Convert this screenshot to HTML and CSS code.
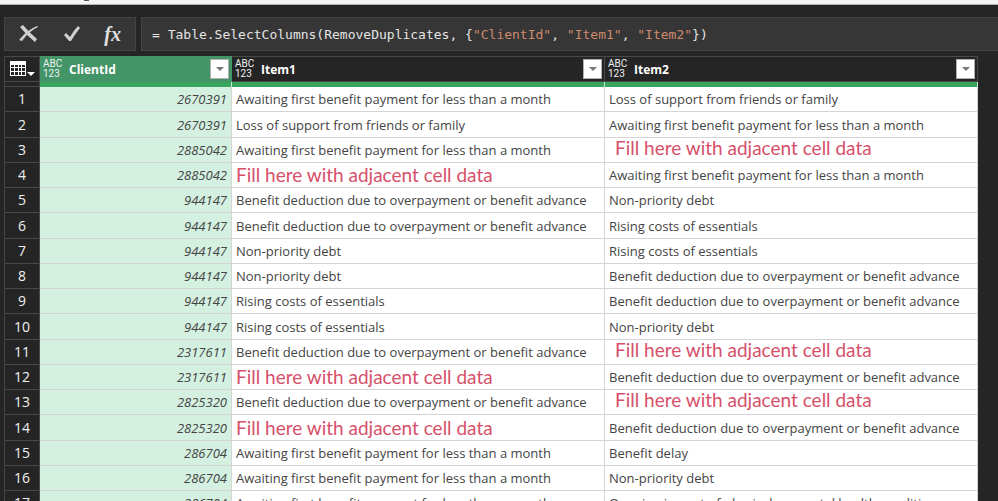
FILE: index.html
```
<!DOCTYPE html>
<html lang="en">
<head>
    <meta charset="UTF-8">
    <meta name="viewport" content="width=device-width, initial-scale=1.0">
    <title>Power Query Editor</title>
    <link rel="stylesheet" href="styles.css">
</head>
<body>
    <div class="ribbon-edge"><span class="ribbon-mark"></span></div>

    <div class="formula-row">
        <div class="formula-actions">
            <button type="button" aria-label="Cancel">
                <svg width="20" height="18" viewBox="0 0 20 18"><path d="M1 2L4 0Q9 6 18 14L16 17Q8 11 1 2Z"/><path d="M19 2Q10 6 3 16L0 15Q8 5 18 1Z"/></svg>
            </button>
            <button type="button" aria-label="Apply">
                <svg width="18" height="16" viewBox="0 0 18 16"><path d="M1 9L3 7L7 11Q11 4 15 0L17 2Q12 8 8 15L6 15Z"/></svg>
            </button>
            <button type="button" class="fx" aria-label="Add step"><i>fx</i></button>
        </div>
        <div class="formula"><code>= Table.SelectColumns(RemoveDuplicates, {<span class="string">"ClientId"</span>, <span class="string">"Item1"</span>, <span class="string">"Item2"</span>})</code></div>
    </div>

    <main class="grid">
        <table>
            <colgroup>
                <col class="col-num">
                <col class="col-id">
                <col class="col-item">
                <col class="col-item">
            </colgroup>
            <thead>
                <tr>
                    <th class="corner">
                        <button type="button" class="table-menu" aria-label="Table options">
                            <svg width="25" height="16" viewBox="0 0 25 16"><path class="frame" d="M0 0H16V15H0Z"/><path class="holes" d="M1 4h3v2H1zM5 4h3v2H5zM9 4h2v2H9zM12 4h3v2h-3zM1 7h3v3H1zM5 7h3v3H5zM9 7h2v3H9zM12 7h3v3h-3zM1 11h3v3H1zM5 11h3v3H5zM9 11h2v3H9zM12 11h3v3h-3z"/><path class="frame" d="M17 11H25L21 15Z"/></svg>
                        </button>
                    </th>
                    <th class="selected">
                        <div class="head">
                            <span class="type"><span>ABC</span><span>123</span></span>
                            <span class="name">ClientId</span>
                            <button type="button" class="filter" aria-label="Filter ClientId"></button>
                        </div>
                    </th>
                    <th>
                        <div class="head">
                            <span class="type"><span>ABC</span><span>123</span></span>
                            <span class="name">Item1</span>
                            <button type="button" class="filter" aria-label="Filter Item1"></button>
                        </div>
                    </th>
                    <th>
                        <div class="head">
                            <span class="type"><span>ABC</span><span>123</span></span>
                            <span class="name">Item2</span>
                            <button type="button" class="filter" aria-label="Filter Item2"></button>
                        </div>
                    </th>
                </tr>
                <tr class="quality"><td></td><td></td><td></td><td></td></tr>
            </thead>
            <tbody>
                <tr><th>1</th><td class="id">2670391</td><td>Awaiting first benefit payment for less than a month</td><td>Loss of support from friends or family</td></tr>
                <tr><th>2</th><td class="id">2670391</td><td>Loss of support from friends or family</td><td>Awaiting first benefit payment for less than a month</td></tr>
                <tr><th>3</th><td class="id">2885042</td><td>Awaiting first benefit payment for less than a month</td><td class="note indent">Fill here with adjacent cell data</td></tr>
                <tr><th>4</th><td class="id">2885042</td><td class="note">Fill here with adjacent cell data</td><td>Awaiting first benefit payment for less than a month</td></tr>
                <tr><th>5</th><td class="id">944147</td><td>Benefit deduction due to overpayment or benefit advance</td><td>Non-priority debt</td></tr>
                <tr><th>6</th><td class="id">944147</td><td>Benefit deduction due to overpayment or benefit advance</td><td>Rising costs of essentials</td></tr>
                <tr><th>7</th><td class="id">944147</td><td>Non-priority debt</td><td>Rising costs of essentials</td></tr>
                <tr><th>8</th><td class="id">944147</td><td>Non-priority debt</td><td>Benefit deduction due to overpayment or benefit advance</td></tr>
                <tr><th>9</th><td class="id">944147</td><td>Rising costs of essentials</td><td>Benefit deduction due to overpayment or benefit advance</td></tr>
                <tr><th>10</th><td class="id">944147</td><td>Rising costs of essentials</td><td>Non-priority debt</td></tr>
                <tr><th>11</th><td class="id">2317611</td><td>Benefit deduction due to overpayment or benefit advance</td><td class="note indent">Fill here with adjacent cell data</td></tr>
                <tr><th>12</th><td class="id">2317611</td><td class="note">Fill here with adjacent cell data</td><td>Benefit deduction due to overpayment or benefit advance</td></tr>
                <tr><th>13</th><td class="id">2825320</td><td>Benefit deduction due to overpayment or benefit advance</td><td class="note indent">Fill here with adjacent cell data</td></tr>
                <tr><th>14</th><td class="id">2825320</td><td class="note">Fill here with adjacent cell data</td><td>Benefit deduction due to overpayment or benefit advance</td></tr>
                <tr><th>15</th><td class="id">286704</td><td>Awaiting first benefit payment for less than a month</td><td>Benefit delay</td></tr>
                <tr><th>16</th><td class="id">286704</td><td>Awaiting first benefit payment for less than a month</td><td>Non-priority debt</td></tr>
                <tr><th>17</th><td class="id">286704</td><td>Awaiting first benefit payment for less than a month</td><td>Ongoing impact of physical or mental health condition</td></tr>
            </tbody>
        </table>
    </main>
</body>
</html>
```
FILE: styles.css
```
* {
    box-sizing: border-box;
}

body {
    margin: 0;
    height: 100vh;
    overflow: hidden;
    display: flex;
    flex-direction: column;
    background-color: #252525;
    font-family: "Open Sans", "Noto Sans", sans-serif;
    font-size: 13px;
    color: #444;
}

button {
    display: flex;
    align-items: center;
    justify-content: center;
    padding: 0;
    border: none;
    background: none;
    color: #e0e0e0;
    cursor: pointer;
}

svg {
    fill: #d0d0d0;
}

.ribbon-edge {
    flex: none;
    height: 5px;
    padding-left: 84px;
    background-color: #f3f4f6;
    border-bottom: 1px solid #b5b5b5;
}

.ribbon-mark {
    display: block;
    width: 5px;
    height: 1px;
    background-color: #555;
}

.formula-row {
    flex: none;
    display: flex;
    gap: 5px;
    height: 34px;
    margin: 12px 0 5px 4px;
}

.formula-actions {
    display: flex;
    align-items: center;
    justify-content: space-between;
    width: 132px;
    padding: 0 14px;
    background-color: #363636;
    border: 1px solid #444;
}

.fx {
    font-family: "Liberation Serif", serif;
    font-size: 20px;
    line-height: 20px;
    font-weight: 700;
}

.formula {
    flex: 1;
    display: flex;
    align-items: center;
    padding-left: 10px;
    background-color: #363636;
    border: 1px solid #444;
    border-right: none;
}

.formula code {
    font-family: "DejaVu Sans Mono", monospace;
    font-size: 13px;
    color: #e4e4e4;
    white-space: pre;
}

.formula .string {
    color: #ce8a70;
}

.grid {
    flex: 1;
    min-height: 0;
    overflow: hidden;
    padding: 0 20px 0 4px;
}

table {
    width: 100%;
    table-layout: fixed;
    border-collapse: separate;
    border-spacing: 0;
}

.col-num {
    width: 36px;
}

.col-id {
    width: 192px;
}

th, td {
    padding: 0;
    white-space: nowrap;
    overflow: hidden;
}

thead th {
    height: 26px;
    background-color: #252525;
    border: 1px solid #484848;
    border-left: none;
}

thead .corner {
    border-left: 1px solid #484848;
}

thead .selected {
    background-color: #439467;
    border-color: #439467;
}

.table-menu {
    margin-left: 5px;
}

.table-menu .frame {
    fill: #fff;
}

.table-menu .holes {
    fill: #252525;
}

.head {
    display: flex;
    align-items: center;
    height: 24px;
    padding: 0 2px 0 3px;
}

.type {
    display: flex;
    flex-direction: column;
    width: 26px;
    font-family: Roboto, sans-serif;
    font-size: 10px;
    line-height: 10px;
    font-weight: 400;
    text-align: left;
    color: #f0f0f0;
}

.name {
    flex: 1;
    text-align: left;
    font-size: 12px;
    font-weight: 700;
    color: #fff;
}

.filter {
    width: 19px;
    height: 20px;
    background-color: #fff;
    border: 1px solid #b0b0b0;
}

.filter::before {
    content: "";
    border: 4px solid transparent;
    border-top-color: #777;
    border-bottom: none;
}

/* column quality strip */
.quality td {
    height: 5px;
    background-color: #38a55d;
    border-right: 1px solid #c8e6d2;
}

.quality td:first-child {
    background-color: #252525;
    border: 1px solid #484848;
    border-top: none;
}

tbody tr {
    height: 25px;
}

/* keeps the average row a little over 25px */
tbody tr:nth-child(4n+2) {
    height: 26px;
}

tbody td {
    background-color: #fff;
    border-right: 1px solid #d4d4d4;
    border-bottom: 1px solid #d4d4d4;
    padding-left: 4px;
    line-height: 20px;
}

tbody th {
    background-color: #252525;
    border: 1px solid #484848;
    border-top: none;
    font-size: 14px;
    line-height: 20px;
    font-weight: 400;
    color: #f0f0f0;
}

tbody .id {
    background-color: #d3f0e0;
    padding: 0 4px 0 0;
    text-align: right;
    font-style: italic;
}

tbody .note {
    font-family: Lato, sans-serif;
    font-size: 19px;
    color: #d6506a;
}

tbody .indent {
    padding: 0 0 4px 10px;
}
```
